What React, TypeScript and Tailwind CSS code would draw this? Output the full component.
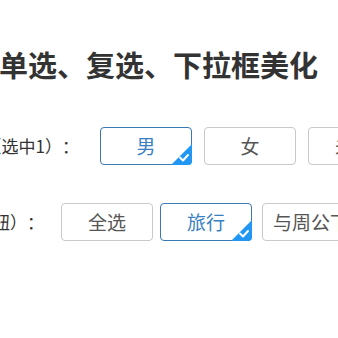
import type { ReactNode } from 'react';

const FONT = "font-['Microsoft_YaHei','Noto_Sans_CJK_SC',sans-serif]";

function CheckCorner() {
  return (
    <svg
      className="absolute -bottom-px -right-px"
      width="21"
      height="21"
      viewBox="0 0 21 21"
    >
      <path d="M21 0 L21 17 Q21 21 17 21 L0 21 Z" fill="#2196f3" />
      <path
        d="M9 13.5 L12 16.5 L17 11"
        fill="none"
        stroke="#fff"
        strokeWidth="2"
        strokeLinecap="round"
        strokeLinejoin="round"
      />
    </svg>
  );
}

type OptionProps = {
  children: ReactNode;
  checked?: boolean;
  className?: string;
};

function Option({ children, checked = false, className = '' }: OptionProps) {
  return (
    <div
      className={`relative flex h-[38px] min-w-[92px] shrink-0 items-center justify-center rounded-[4px] border px-[10px] text-[19px] ${
        checked ? 'border-[#3a78b5] text-[#3a7fc1]' : 'border-[#c9c9c9] text-[#555]'
      } ${className}`}
    >
      {children}
      {checked && <CheckCorner />}
    </div>
  );
}

export default function App() {
  return (
    <div
      className={`h-[338px] w-[338px] overflow-hidden bg-white [text-spacing-trim:space-all] ${FONT}`}
    >
      <h1 className="mt-[47px] -ml-[1px] whitespace-nowrap text-[29px] font-bold leading-[34px] text-[#333]">
        单选、复选、下拉框美化
      </h1>

      <div className="mt-[46px] flex items-center whitespace-nowrap">
        <div className="flex w-[79px] shrink-0 justify-end overflow-hidden text-[17px] text-[#333]">
          <span>性别（选中1）：</span>
        </div>
        <Option checked className="ml-[21px]">
          男
        </Option>
        <Option className="ml-[12px]">女</Option>
        <Option className="ml-[12px]">未知</Option>
      </div>

      <div className="mt-[38px] flex items-center whitespace-nowrap">
        <div className="flex w-[44px] shrink-0 justify-end overflow-hidden text-[17px] text-[#333]">
          <span>爱好（多选，带全选按钮）：</span>
        </div>
        <Option className="ml-[17px]">全选</Option>
        <Option checked className="ml-[7px]">
          旅行
        </Option>
        <Option className="ml-[10px]">与周公下棋</Option>
      </div>
    </div>
  );
}
